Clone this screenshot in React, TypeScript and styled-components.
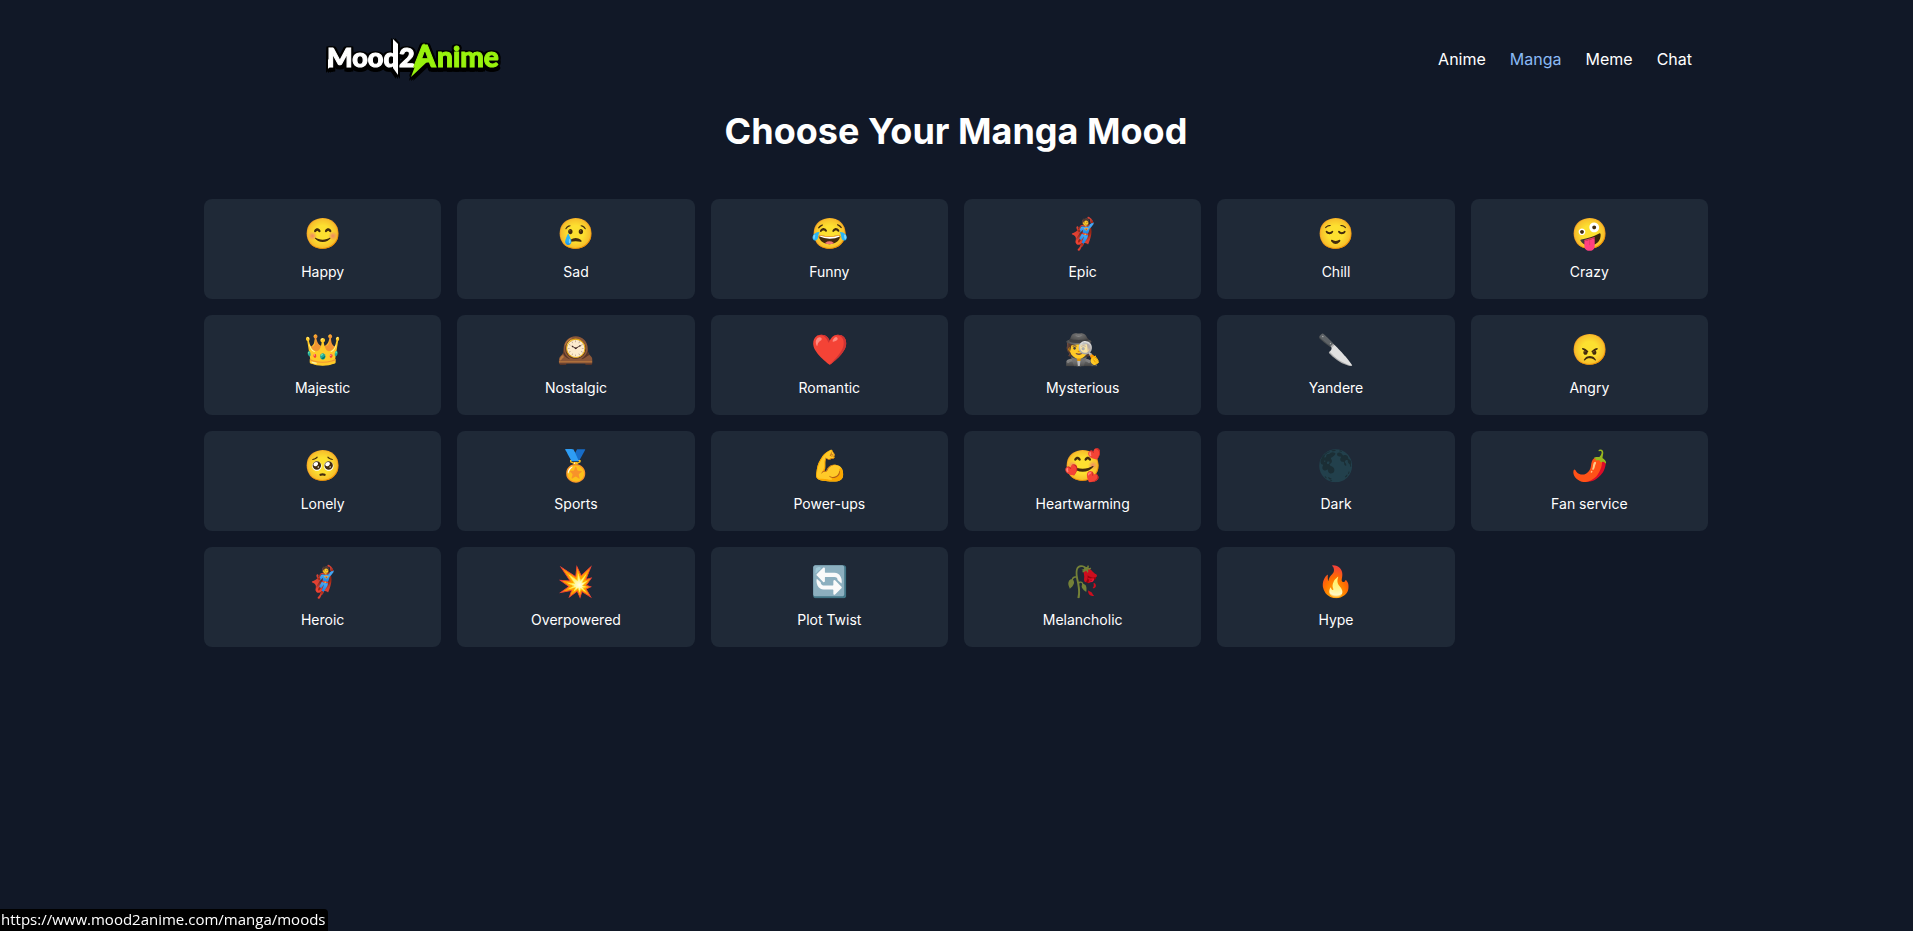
import React from "react";
import styled, { createGlobalStyle } from "styled-components";

const GlobalStyle = createGlobalStyle`
  *, *::before, *::after { box-sizing: border-box; }
  body {
    margin: 0;
    background: #111827;
    color: #ffffff;
    font-family: Inter, "Liberation Sans", sans-serif;
    font-size: 16px;
    line-height: 24px;
  }
`;

const Page = styled.div`
  min-height: 100vh;
  padding-right: 1px;
`;

const Container = styled.div`
  width: 100%;
  max-width: 1536px;
  margin: 0 auto;
  padding: 0 16px;
`;

const Header = styled.header`
  display: flex;
  align-items: center;
  justify-content: space-between;
  padding: 28px 16px 21px 120px;
`;

const LogoLink = styled.a`
  display: block;
  line-height: 0;
`;

const LogoDrawing = styled.svg`
  display: block;
  overflow: visible;
  font-family: Lato, "Liberation Sans", sans-serif;
  font-weight: 900;
  filter: drop-shadow(2px 0 0 #000000) drop-shadow(-2px 0 0 #000000)
    drop-shadow(0 -1px 0 #000000) drop-shadow(0 4px 0 #000000);
`;

const Nav = styled.nav`
  display: flex;
  gap: 24px;
`;

const NavLink = styled.a<{ $active?: boolean }>`
  color: ${({ $active }) => ($active ? "#8abaf5" : "#ffffff")};
  text-decoration: none;
`;

const Title = styled.h1`
  margin: 0 0 48px;
  font-size: 36px;
  font-weight: 700;
  line-height: 40px;
  text-align: center;
`;

const MoodGrid = styled.div`
  display: grid;
  grid-template-columns: repeat(6, minmax(0, 1fr));
  gap: 16px;
`;

const MoodCard = styled.button`
  display: flex;
  flex-direction: column;
  align-items: center;
  gap: 10px;
  padding: 16px;
  border: 0;
  border-radius: 8px;
  background: #1f2937;
  color: inherit;
  font: inherit;
  cursor: pointer;
`;

const MoodEmoji = styled.span`
  font-size: 30px;
  line-height: 36px;
`;

const MoodName = styled.span`
  font-size: 14px;
  line-height: 22px;
`;

const StatusBar = styled.div`
  position: fixed;
  left: 0;
  bottom: 0;
  padding: 0 2px 2px 1px;
  border-top-right-radius: 4px;
  background: #000000;
  font-family: "Open Sans", "Noto Sans", sans-serif;
  font-size: 15px;
  line-height: 20px;
`;

const links = ["Anime", "Manga", "Meme", "Chat"];

const moods: [string, string][] = [
  ["😊", "Happy"],
  ["😢", "Sad"],
  ["😂", "Funny"],
  ["🦸", "Epic"],
  ["😌", "Chill"],
  ["🤪", "Crazy"],
  ["👑", "Majestic"],
  ["🕰️", "Nostalgic"],
  ["❤️", "Romantic"],
  ["🕵️", "Mysterious"],
  ["🔪", "Yandere"],
  ["😠", "Angry"],
  ["🥺", "Lonely"],
  ["🏅", "Sports"],
  ["💪", "Power-ups"],
  ["🥰", "Heartwarming"],
  ["🌑", "Dark"],
  ["🌶️", "Fan service"],
  ["🦸", "Heroic"],
  ["💥", "Overpowered"],
  ["🔄", "Plot Twist"],
  ["🥀", "Melancholic"],
  ["🔥", "Hype"],
];

// Blade-like accents that extend the lettering of the logo.
const spikes = [
  { d: "M4 31l5 4l-5 6z", fill: "#ffffff" },
  { d: "M69 11l5 5v31l-5 -7z", fill: "#ffffff" },
  { d: "M100 15l4 9h-8z", fill: "#98f20d" },
  { d: "M104 33l-17 16l6 -16z", fill: "#98f20d" },
];

function Logo() {
  return (
    <LogoDrawing width="184" height="62" viewBox="0 0 184 62" aria-label="Mood2Anime">
      <text y="39" fontSize="27">
        <tspan x="3" fill="#ffffff" stroke="#ffffff">Mood</tspan>
        <tspan x="75" fill="#ffffff" stroke="#ffffff">2</tspan>
        <tspan x="90" fontSize="31" fill="#98f20d" stroke="#98f20d">A</tspan>
        <tspan x="113" fontSize="28" fill="#98f20d" stroke="#98f20d">nime</tspan>
      </text>
      {spikes.map(({ d, fill }) => (
        <path key={d} d={d} fill={fill} />
      ))}
    </LogoDrawing>
  );
}

export default function App() {
  return (
    <Page>
      <GlobalStyle />
      <Container>
        <Header>
          <LogoLink href="#home">
            <Logo />
          </LogoLink>
          <Nav>
            {links.map((name) => (
              <NavLink key={name} href={`#${name.toLowerCase()}`} $active={name === "Manga"}>
                {name}
              </NavLink>
            ))}
          </Nav>
        </Header>
        <main>
          <Title>Choose Your Manga Mood</Title>
          <MoodGrid>
            {moods.map(([emoji, name]) => (
              <MoodCard key={name} type="button">
                <MoodEmoji>{emoji}</MoodEmoji>
                <MoodName>{name}</MoodName>
              </MoodCard>
            ))}
          </MoodGrid>
        </main>
      </Container>
      <StatusBar>https://www.mood2anime.com/manga/moods</StatusBar>
    </Page>
  );
}
